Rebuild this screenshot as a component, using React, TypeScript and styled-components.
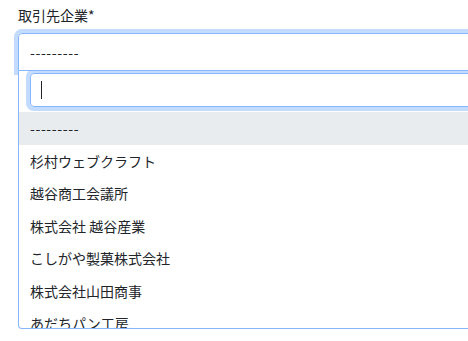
import styled, { createGlobalStyle } from 'styled-components';

const GlobalStyle = createGlobalStyle`
  html {
    overflow: hidden;
  }
  body {
    margin: 0;
    min-height: 341px;
    background: #fff;
    font-family: "Noto Sans CJK JP", "Noto Sans", sans-serif;
    color: #212529;
  }
`;

const Page = styled.div`
  padding: 5px 0 0 18px;
`;

const Label = styled.label`
  display: block;
  font-size: 14px;
  line-height: 21px;
  margin-bottom: 7px;
`;

const Field = styled.div`
  position: relative;
  width: 560px;
`;

const Selection = styled.div`
  box-sizing: border-box;
  height: 38px;
  display: flex;
  align-items: center;
  padding: 0 11px;
  border: 1px solid #86b7fe;
  border-radius: 4px 4px 0 0;
  box-shadow: 0 0 0 4px rgba(13, 110, 253, 0.25);
  font-size: 14px;
  letter-spacing: 0.6px;
`;

const Dropdown = styled.div`
  position: absolute;
  top: 100%;
  left: 0;
  right: 0;
  box-sizing: border-box;
  background: #fff;
  border: 1px solid #86b7fe;
  border-top: none;
  border-radius: 0 0 4px 4px;
  overflow: hidden;
  z-index: 2;
`;

const SearchBox = styled.div`
  padding: 2px 11px 5px;
`;

const SearchField = styled.div`
  box-sizing: border-box;
  height: 34px;
  display: flex;
  align-items: center;
  padding: 0 10px;
  border: 1px solid #86b7fe;
  border-radius: 4px;
  box-shadow: 0 0 0 4px rgba(13, 110, 253, 0.25);
`;

const Caret = styled.span`
  width: 1px;
  height: 18px;
  background: #212529;
`;

const Results = styled.ul`
  list-style: none;
  margin: 0;
  padding: 0;
  max-height: 216px;
  overflow: hidden;
`;

const Option = styled.li<{ $active?: boolean }>`
  padding: 6px 11px;
  font-size: 14px;
  line-height: 20.5px;
  white-space: nowrap;
  background: ${(p) => (p.$active ? '#e9ecef' : 'transparent')};
  letter-spacing: ${(p) => (p.$active ? '0.6px' : '0')};
`;

const companies = [
  '---------',
  '杉村ウェブクラフト',
  '越谷商工会議所',
  '株式会社 越谷産業',
  'こしがや製菓株式会社',
  '株式会社山田商事',
  'あだちパン工房',
];

export default function App() {
  return (
    <Page>
      <GlobalStyle />
      <Label>取引先企業*</Label>
      <Field>
        <Selection>---------</Selection>
        <Dropdown>
          <SearchBox>
            <SearchField>
              <Caret />
            </SearchField>
          </SearchBox>
          <Results>
            {companies.map((name, i) => (
              <Option key={name} $active={i === 0}>
                {name}
              </Option>
            ))}
          </Results>
        </Dropdown>
      </Field>
    </Page>
  );
}
